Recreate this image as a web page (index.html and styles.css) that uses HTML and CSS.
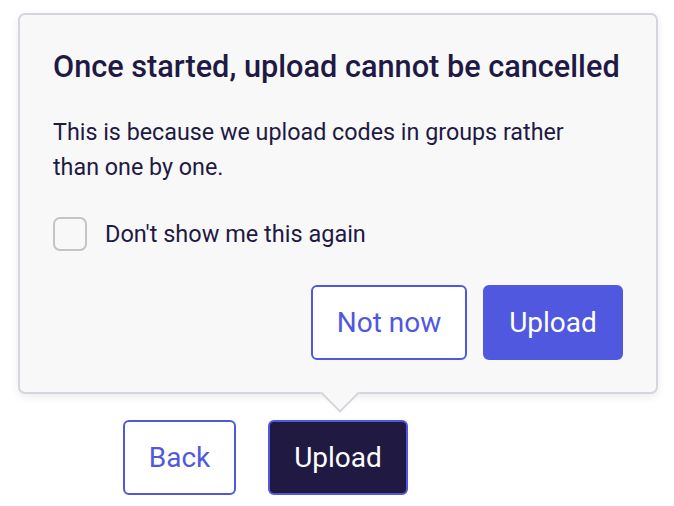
FILE: index.html
```html
<!DOCTYPE html>
<html>
<head>
<meta charset="utf-8">
<link rel="stylesheet" href="styles.css">
</head>
<body>
<div class="page">
  <div class="popover">
    <h1 class="title">Once started, upload cannot be cancelled</h1>
    <p class="text">This is because we upload codes in groups rather than one by one.</p>
    <label class="check">
      <span class="box"></span>
      <span class="check-label">Don't show me this again</span>
    </label>
    <div class="actions">
      <button class="btn btn-outline btn-notnow">Not now</button>
      <button class="btn btn-primary">Upload</button>
    </div>
  </div>
  <div class="footer">
    <button class="btn btn-outline btn-back">Back</button>
    <button class="btn btn-dark">Upload</button>
  </div>
</div>
</body>
</html>
```
FILE: styles.css
```css
html, body {
  margin: 0;
  padding: 0;
  background: #ffffff;
}
body {
  font-family: Roboto, "Liberation Sans", sans-serif;
  color: #1f1a44;
}
.page {
  padding: 13px 0 0 18px;
}
.popover {
  position: relative;
  box-sizing: border-box;
  width: 640px;
  height: 381px;
  background: #f8f8f8;
  border: 2px solid #d6d4de;
  border-radius: 7px;
  box-shadow: 0 3px 8px rgba(0, 0, 0, 0.08);
  padding: 34px 33px 0 33px;
}
.popover::after {
  content: "";
  position: absolute;
  left: 306px;
  bottom: -15px;
  width: 26px;
  height: 26px;
  background: #f8f8f8;
  border-right: 2px solid #d6d4de;
  border-bottom: 2px solid #d6d4de;
  transform: rotate(45deg);
}
.title {
  margin: 0;
  font-size: 30.7px;
  line-height: 36px;
  font-weight: 500;
  color: #1f1a44;
}
.text {
  margin: 30px 0 0 0;
  font-size: 23.3px;
  line-height: 35px;
  width: 540px;
}
.check {
  display: flex;
  align-items: center;
  gap: 18px;
  margin-top: 32px;
  font-size: 23.5px;
}
.box {
  box-sizing: border-box;
  width: 34px;
  height: 34px;
  border: 2px solid #c4c4c4;
  border-radius: 7px;
  background: #f8f8f8;
}
.actions {
  display: flex;
  justify-content: flex-end;
  gap: 16px;
  margin-top: 34px;
}
.btn {
  box-sizing: border-box;
  height: 75px;
  border-radius: 6px;
  font-family: Roboto, "Liberation Sans", sans-serif;
  font-size: 28px;
  padding: 0;
  cursor: pointer;
}
.btn-outline {
  background: #ffffff;
  border: 2px solid #5058e0;
  color: #5058e0;
}
.btn-notnow {
  width: 156px;
}
.btn-primary {
  width: 140px;
  background: #5058e0;
  border: 2px solid #5058e0;
  color: #ffffff;
}
.footer {
  display: flex;
  gap: 32px;
  padding: 26px 0 0 105px;
}
.btn-back {
  width: 113px;
}
.btn-dark {
  width: 140px;
  background: #201942;
  border: 2px solid #5058e0;
  color: #ffffff;
}
```
